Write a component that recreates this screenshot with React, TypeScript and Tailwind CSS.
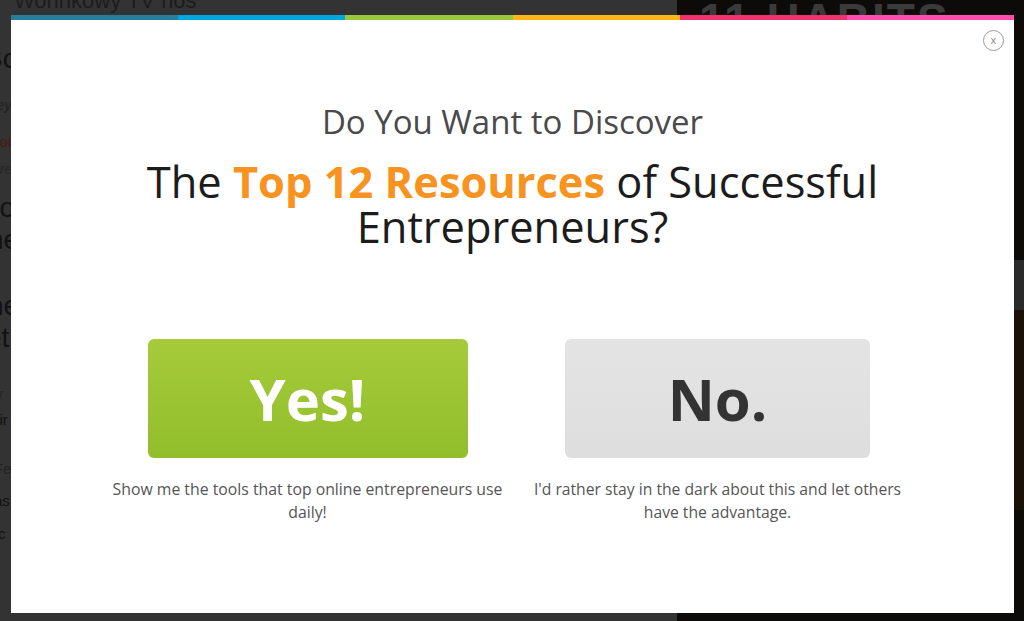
import React from "react";

const segs = ["bg-[#267d9c]", "bg-[#00a6de]", "bg-[#97c83c]", "bg-[#fdb614]", "bg-[#f1316d]", "bg-[#ff4cae]"];

export default function App() {
  return (
    <div className="relative w-[1024px] h-[621px] overflow-hidden bg-[#333333]" style={{ fontFamily: '"Open Sans", "Liberation Sans", sans-serif' }}>
      {/* background page (dimmed) */}
      <div className="flex h-full">
        <div className="w-[677px] h-full pt-0 text-[#121212]" style={{ fontFamily: '"Liberation Sans", Arial, sans-serif' }}>
          <div className="pl-[14px] -mt-[12px] text-[22px] text-[#1c1c1c] leading-[26px]">Wohnkowy TV hos</div>
          <div className="mt-[30px] pl-[0px] text-[28px] leading-[30px] -ml-[16px]">Bot</div>
          <div className="mt-[20px] -ml-[4px] text-[15px] italic text-[#222]">ey</div>
          <div className="mt-[14px] -ml-[8px] text-[15px] text-[#4a1a10]">you</div>
          <div className="mt-[6px] -ml-[8px] text-[14px] italic text-[#262626]">are</div>
          <div className="mt-[12px] -ml-[16px] text-[28px] leading-[32px]">bo</div>
          <div className="-ml-[12px] text-[28px] leading-[32px]">ne</div>
          <div className="mt-[34px] -ml-[12px] text-[28px] leading-[32px]">ne</div>
          <div className="-ml-[14px] text-[28px] leading-[32px]">et</div>
          <div className="mt-[30px] -ml-[4px] text-[14px] italic text-[#262626]">ir</div>
          <div className="mt-[4px] -ml-[8px] text-[15px]">sir</div>
          <div className="mt-[26px] -ml-[6px] text-[15px] text-[#222]">Fe</div>
          <div className="mt-[10px] -ml-[6px] text-[15px]">as</div>
          <div className="mt-[10px] -ml-[2px] text-[15px]">c</div>
        </div>
        <div className="flex-1 h-full bg-[#0d0b09] relative">
          <div className="absolute left-[22px] -top-[14px] text-[46px] font-bold text-[#3a3a3a] tracking-[2px]" style={{ fontFamily: '"Liberation Sans", Arial, sans-serif' }}>11 HABITS</div>
          <div className="absolute left-[320px] top-[260px] w-[30px] h-[60px] bg-[#2a2a2a]" />
          <div className="absolute left-[310px] top-[310px] w-[40px] h-[200px] bg-[#1a1208]" />
        </div>
      </div>

      {/* modal */}
      <div className="absolute left-[11px] top-[15px] w-[1003px] h-[598px] bg-white flex flex-col">
        <div className="flex h-[5px]">
          {segs.map((c, i) => (
            <div key={i} className={`flex-1 ${c}`} />
          ))}
        </div>
        <button className="absolute right-[10px] top-[15px] w-[21px] h-[21px] rounded-full border-[1.5px] border-[#9a9a9a] flex items-center justify-center text-[11px] leading-none text-[#8a8a8a]">
          <span className="-mt-[2px]">x</span>
        </button>

        <div className="flex flex-col items-center pt-[79px]">
          <div className="text-[33px] leading-[45px] font-normal text-[#4a4a4a]">Do You Want to Discover</div>
          <div className="mt-[15px] w-[780px] text-center text-[43.4px] leading-[45px] text-[#1c1c1c]">
            The <span className="font-bold text-[#f7931e]">Top 12 Resources</span> of Successful Entrepreneurs?
          </div>

          <div className="mt-[90px] flex w-[820px]">
            <div className="w-[410px] flex flex-col items-center">
              <button className="w-[320px] h-[119px] rounded-[6px] bg-gradient-to-b from-[#a6cb3a] to-[#92be2b] text-white font-bold text-[58px] leading-none flex items-center justify-center">
                Yes!
              </button>
              <p className="mt-[20px] px-[2px] text-center text-[15.8px] leading-[23px] text-[#555]">
                Show me the tools that top online entrepreneurs use daily!
              </p>
            </div>
            <div className="w-[410px] flex flex-col items-center">
              <button className="w-[305px] h-[119px] rounded-[6px] bg-gradient-to-b from-[#e4e4e4] to-[#dedede] text-[#333] font-bold text-[58px] leading-none flex items-center justify-center">
                No.
              </button>
              <p className="mt-[20px] px-[18px] text-center text-[15.7px] leading-[23px] text-[#555]">
                I'd rather stay in the dark about this and let others have the advantage.
              </p>
            </div>
          </div>
        </div>
      </div>
    </div>
  );
}
